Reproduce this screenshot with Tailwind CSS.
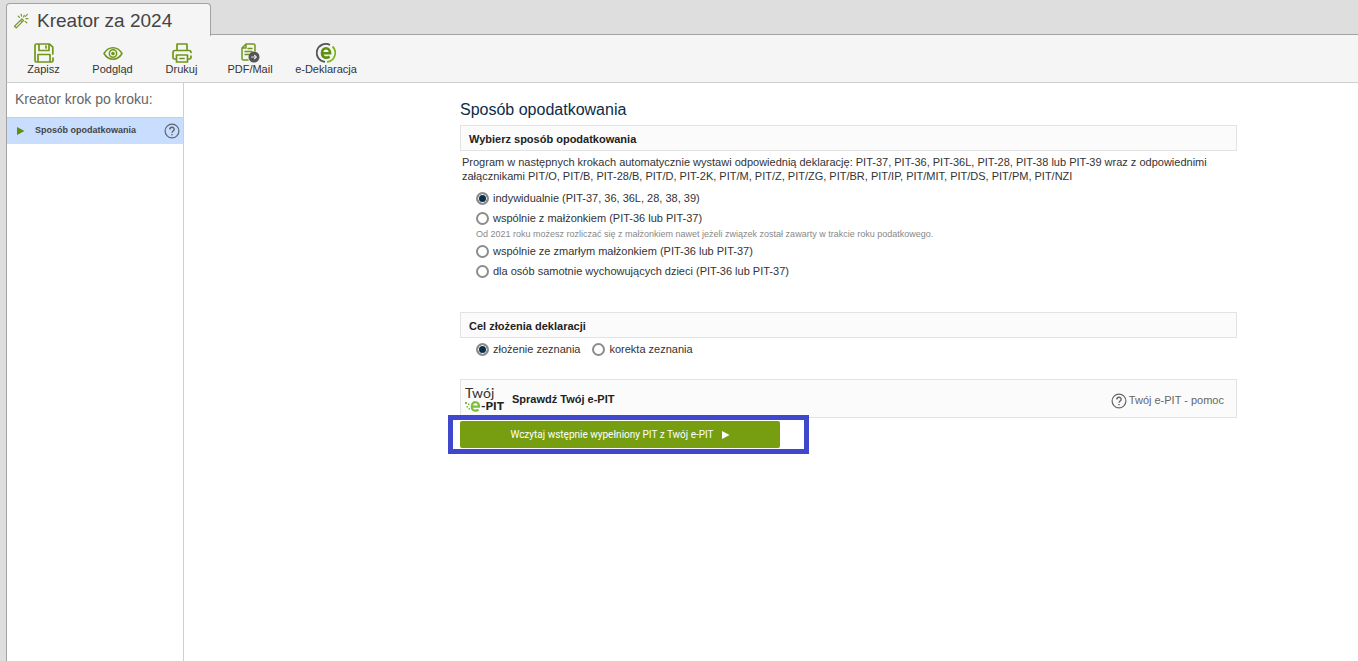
<!DOCTYPE html>
<html lang="pl">

<head>
    <meta charset="UTF-8">
    <meta name="viewport" content="width=device-width, initial-scale=1.0">
    <title>Kreator za 2024</title>
    <script src="https://cdn.jsdelivr.net/npm/@tailwindcss/browser@4"></script>
</head>

<body class="bg-[#dedede] font-['Liberation_Sans',Arial,sans-serif] text-[#333]">
    <div class="flex min-h-screen flex-col pl-1.5 pt-[3px]">
        <!-- Tab -->
        <header class="flex h-8 items-stretch">
            <div class="relative z-10 -mb-px flex w-[205px] items-center gap-2 rounded-t border border-b-0 border-[#a3a3a3] bg-[#f5f5f5] pl-1.5 pt-0.5">
                <svg class="h-4 w-4" viewBox="0 0 16 16" fill="none" stroke="#7a9a2e" stroke-width="1.2" stroke-linecap="round" aria-hidden="true">
                    <path d="M1.5 13.2 9 5.8l1.6 1.6-7.4 7.4zM7.6 7.2l1.6 1.6M8 1.2l.6 2M5.2 3.2l1.4 1.2M11.2 2.4l-.6 1.6M14.4 1.4l-2 2M13 5.6h2M12.2 8.4l1.6 1.4" />
                </svg>
                <h1 class="text-[19px] leading-6 text-[#444]">Kreator za 2024</h1>
            </div>
            <div class="flex-1 border-b border-[#a3a3a3]"></div>
        </header>

        <!-- Toolbar -->
        <nav class="flex h-12 items-start border-b border-l border-b-[#cfcfcf] border-l-[#a3a3a3] bg-[#f5f5f5] pl-0.5 pt-2 text-[11px] leading-[13px] text-[#333]">
            <button type="button" class="flex w-[69px] flex-col items-center">
                <svg class="h-5 w-5" viewBox="0 0 20 20" fill="none" stroke="#72961c" stroke-width="1.7" stroke-linejoin="round" stroke-linecap="round" aria-hidden="true">
                    <path d="M18.8 11V4.2L15.6 1H2.4Q1 1 1 2.4v15Q1 19 2.4 19h15.2Q19 19 19 17.4V15M5 1v6.5h10V1M12 3v2M4 19v-7.500h12V19" />
                </svg>
                Zapisz
            </button>
            <button type="button" class="flex w-[69px] flex-col items-center">
                <svg class="h-5 w-5" viewBox="0 0 20 20" fill="none" stroke="#72961c" stroke-width="1.5" aria-hidden="true">
                    <path d="M1 10.5C5.500 2.800 14.500 2.800 19 10.500C14.500 18.200 5.500 18.200 1 10.500z" />
                    <circle cx="10" cy="10.5" r="3.7" />
                    <circle cx="10" cy="10.5" r="1.1" fill="#72961c" />
                </svg>
                Podgląd
            </button>
            <button type="button" class="flex w-[69px] flex-col items-center">
                <svg class="h-5 w-5" viewBox="0 0 20 20" fill="none" stroke="#72961c" stroke-width="1.7" stroke-linejoin="round" stroke-linecap="round" aria-hidden="true">
                    <path d="M5 7V1h10v6M4 16H2.400Q1 16 1 14.500V9.500Q1 7.500 3 7.500h14q2 0 2 2M19 13v1.500q0 1.500-1.500 1.500H16M4.500 12h11v7h-11zM8 15.500h4" />
                </svg>
                Drukuj
            </button>
            <button type="button" class="flex w-[68px] flex-col items-center">
                <svg class="h-5 w-5" viewBox="0 0 20 20" fill="none" stroke="#72961c" stroke-width="1.5" stroke-linejoin="round" stroke-linecap="round" aria-hidden="true">
                    <path d="M8 17H3.500Q2 17 2 15.500V5L6 1h7.500Q15 1 15 2.500V8M6 1v4H2M8 5.500h4M5 8.500h7M5 11.500h4" />
                    <circle cx="14" cy="14" r="5.500" fill="#555" stroke="none" />
                    <path d="M11.500 14h4.500M14.500 12.300 16.300 14l-1.800 1.700" stroke="#ddd" stroke-width="1.200" />
                </svg>
                PDF/Mail
            </button>
            <button type="button" class="flex w-[84px] flex-col items-center">
                <svg class="h-5 w-5" viewBox="0 0 20 20" fill="none" aria-hidden="true">
                    <path d="M14 2A9 9 0 1 0 9 18.900" stroke="#555" stroke-width="1.800" />
                    <path d="M16.500 3.500A9 9 0 0 1 11 18.900" stroke="#7db61c" stroke-width="1.800" />
                    <path d="M6.500 10.300h7.600C14.100 3.600 6 3.600 6 9.900c0 5.600 5 5.300 7.600 3.700" stroke="#5f8f0e" stroke-width="2.600" />
                </svg>
                e-Deklaracja
            </button>
        </nav>

        <div class="flex flex-1 border-l border-[#a3a3a3] bg-white">
            <!-- Steps -->
            <aside class="w-[177px] shrink-0 border-r border-[#cfcfcf]">
                <h2 class="h-[34px] pl-2 pt-1.5 text-sm leading-5 text-[#666]">Kreator krok po kroku:</h2>
                <div class="flex h-[27px] items-center border-t border-[#c6cedb] bg-[#c9deff] pl-2.5 pr-[3px]">
                    <svg class="h-2 w-2" viewBox="0 0 8 8" fill="#5f8f0e" aria-hidden="true"><path d="M0 0l7.500 4L0 8z" /></svg>
                    <a href="#" class="ml-2.5 flex-1 text-[9px] font-bold text-[#444]">Sposób opodatkowania</a>
                    <button type="button" aria-label="Pomoc">
                        <svg class="h-4 w-4" viewBox="0 0 16 16" fill="none" stroke="#5c6470" stroke-width="1.2" aria-hidden="true">
                            <circle cx="8" cy="8" r="6.900" />
                            <path d="M5.800 6.400C5.800 3.500 10.200 3.500 10.200 6.300 10.200 8 8 8 8 9.800M8 11v1.300" stroke-width="1.400" />
                        </svg>
                    </button>
                </div>
            </aside>

            <!-- Form -->
            <main class="min-w-0 flex-1 pl-[276px] pr-4 pt-[17px]">
                <form class="max-w-[777px] text-[11px]">
                    <h2 class="text-base leading-5 text-[#0b2d48]">Sposób opodatkowania</h2>

                    <h3 class="mt-[5px] flex h-[26px] items-center border border-[#e3e3e3] bg-[#fbfbfb] px-2 pt-0.5 font-bold text-[#222]">Wybierz sposób opodatkowania</h3>
                    <p class="mt-1 px-0.5 leading-[14px]">Program w następnych krokach automatycznie wystawi odpowiednią deklarację: PIT-37, PIT-36, PIT-36L, PIT-28, PIT-38 lub PIT-39 wraz z odpowiednimi załącznikami PIT/O, PIT/B, PIT-28/B, PIT/D, PIT-2K, PIT/M, PIT/Z, PIT/ZG, PIT/BR, PIT/IP, PIT/MIT, PIT/DS, PIT/PM, PIT/NZI</p>
                    <div class="mt-[5px] flex flex-col items-start pl-4">
                        <label class="flex h-5 items-center gap-1">
                            <input type="radio" name="sposob" checked class="h-[13px] w-[13px] appearance-none rounded-full border-2 border-[#8c8c8c] bg-white checked:bg-[#0b2d48] checked:ring-1 checked:ring-white checked:ring-inset">
                            indywidualnie (PIT-37, 36, 36L, 28, 38, 39)
                        </label>
                        <label class="flex h-5 items-center gap-1">
                            <input type="radio" name="sposob" class="h-[13px] w-[13px] appearance-none rounded-full border-2 border-[#8c8c8c] bg-white checked:bg-[#0b2d48] checked:ring-1 checked:ring-white checked:ring-inset">
                            wspólnie z małżonkiem (PIT-36 lub PIT-37)
                        </label>
                        <p class="text-[9px] leading-[13px] text-[#888]">Od 2021 roku możesz rozliczać się z małżonkiem nawet jeżeli związek został zawarty w trakcie roku podatkowego.</p>
                        <label class="flex h-5 items-center gap-1">
                            <input type="radio" name="sposob" class="h-[13px] w-[13px] appearance-none rounded-full border-2 border-[#8c8c8c] bg-white checked:bg-[#0b2d48] checked:ring-1 checked:ring-white checked:ring-inset">
                            wspólnie ze zmarłym małżonkiem (PIT-36 lub PIT-37)
                        </label>
                        <label class="flex h-5 items-center gap-1">
                            <input type="radio" name="sposob" class="h-[13px] w-[13px] appearance-none rounded-full border-2 border-[#8c8c8c] bg-white checked:bg-[#0b2d48] checked:ring-1 checked:ring-white checked:ring-inset">
                            dla osób samotnie wychowujących dzieci (PIT-36 lub PIT-37)
                        </label>
                    </div>

                    <h3 class="mt-[31px] flex h-[26px] items-center border border-[#e3e3e3] bg-[#fbfbfb] px-2 pt-0.5 font-bold text-[#222]">Cel złożenia deklaracji</h3>
                    <div class="mt-px flex gap-3 pl-4">
                        <label class="flex h-5 items-center gap-1">
                            <input type="radio" name="cel" checked class="h-[13px] w-[13px] appearance-none rounded-full border-2 border-[#8c8c8c] bg-white checked:bg-[#0b2d48] checked:ring-1 checked:ring-white checked:ring-inset">
                            złożenie zeznania
                        </label>
                        <label class="flex h-5 items-center gap-1">
                            <input type="radio" name="cel" class="h-[13px] w-[13px] appearance-none rounded-full border-2 border-[#8c8c8c] bg-white checked:bg-[#0b2d48] checked:ring-1 checked:ring-white checked:ring-inset">
                            korekta zeznania
                        </label>
                    </div>

                    <div class="mt-5 flex h-[39px] items-center border border-[#e3e3e3] bg-[#fbfbfb] pl-1 pr-3">
                        <div class="flex w-[47px] flex-col font-[Lato,sans-serif] text-[#333]">
                            <span class="text-[14px] leading-[14px]">Twój</span>
                            <span class="flex items-center text-xs leading-3 font-black text-[#222]">
                                <svg class="h-3 w-4" viewBox="0 0 16 12" fill="#7cbf3a" aria-hidden="true">
                                    <path d="M0 2h2v2H0zM3 3.500h1.500V5H3zM1.500 6h1.500v1.500H1.500zM3.500 8H5v1.500H3.500z" />
                                    <path d="M7 6.600h7C14 .8 6.800.8 6.800 6.400c0 5 4.700 4.800 6.700 3.300" fill="none" stroke="#7cbf3a" stroke-width="2.200" />
                                </svg>
                                -PIT
                            </span>
                        </div>
                        <h3 class="flex-1 pt-0.5 font-bold text-[#222]">Sprawdź Twój e-PIT</h3>
                        <a href="#" class="flex items-center gap-0.5 pt-1 text-[11px] text-[#666]">
                            <svg class="h-4 w-4" viewBox="0 0 16 16" fill="none" stroke="#666" stroke-width="1.2" aria-hidden="true">
                                <circle cx="8" cy="8" r="6.900" />
                                <path d="M5.800 6.400C5.800 3.500 10.200 3.500 10.200 6.300 10.200 8 8 8 8 9.800M8 11v1.300" stroke-width="1.400" />
                            </svg>
                            Twój e-PIT - pomoc
                        </a>
                    </div>

                    <div class="relative mt-[3px] w-80">
                        <button type="button" class="flex h-[27px] w-full items-center justify-center gap-2 rounded-xs bg-[#769e10] font-[Roboto,sans-serif] text-[10px] text-white">
                            Wczytaj wstępnie wypełniony PIT z Twój e-PIT
                            <svg class="h-2 w-2" viewBox="0 0 8 8" fill="currentColor" aria-hidden="true"><path d="M0 0l7.500 4L0 8z" /></svg>
                        </button>
                        <!-- Highlight frame -->
                        <div class="pointer-events-none absolute -top-1.5 -left-3 h-[39px] w-[361px] border-5 border-[#3f48cc]"></div>
                    </div>
                </form>
            </main>
        </div>
    </div>
</body>

</html>
